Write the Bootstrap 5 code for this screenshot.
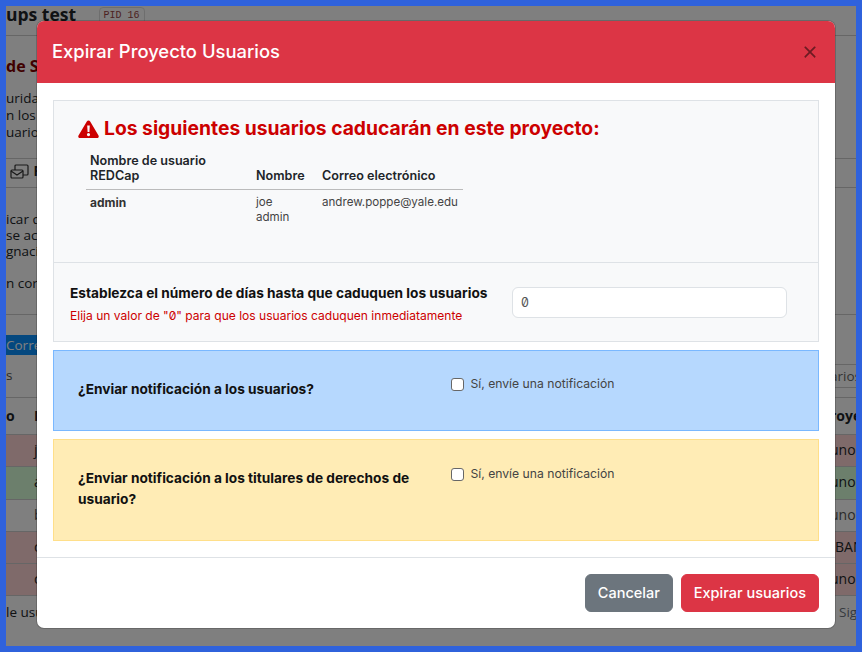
<!DOCTYPE html>
<html lang="es">
<head>
    <meta charset="UTF-8">
    <meta name="viewport" content="width=device-width, initial-scale=1.0">
    <title>Expirar Proyecto Usuarios</title>
    <link href="https://cdn.jsdelivr.net/npm/bootstrap@5.3.0/dist/css/bootstrap.min.css" rel="stylesheet">
    <style>
        html, body { margin: 0; height: 652px; overflow: hidden; }
        body { font-family: "Open Sans", "Noto Sans", sans-serif; font-size: 13.5px; color: #212529; }
        /* marco azul de la captura */
        .marco { position: relative; width: 862px; height: 652px; border: 6px solid #2f62dc; background: #fff; overflow: hidden; }
        .velo { position: absolute; inset: 0; background: #000; opacity: .5; }

        /* pagina de fondo */
        .fondo > div { white-space: nowrap; }
        .fila-titulo { height: 30px; font-size: 17.5px; font-weight: 700; line-height: 16px; border-bottom: 1px solid #ccc; }
        .pid { font-family: "Liberation Mono", monospace; font-size: 10px; font-weight: 400; color: #944; border: 1px solid #ddd; border-radius: 4px; padding: 2px 4px; margin-left: 18px; vertical-align: 3px; }
        .fila-sub { height: 42px; padding-top: 21px; font-size: 16px; line-height: 18px; font-weight: 700; color: #800000; }
        .fila-texto { height: 80px; padding-top: 12px; line-height: 17px; }
        .fila-tabs { height: 30px; line-height: 25px; border-top: 1px solid #ccc; border-bottom: 1px solid #ccc; font-weight: 700; }
        .fila-aviso { height: 127px; padding-top: 23px; line-height: 16px; border-bottom: 1px solid #ccc; }
        .hueco { height: 20px; }
        .barra-azul { height: 20px; width: 60px; background: #0890ff; color: #fff; line-height: 20px; }
        .fila-busca { height: 42px; padding-top: 9px; line-height: 22px; color: #555; }
        .caja-busca { border-top: 1px solid #ccc; border-bottom: 1px solid #ccc; width: 21px; height: 24px; overflow: hidden; color: #666; }
        .fila-tabla { line-height: 30px; border-top: 1px solid #ccc; font-size: 14px; }
        .cab-tabla { height: 37px; font-weight: 700; line-height: 35px; }
        .rojo { background: #ffd5d5; height: 32px; }
        .verde { background: #d8ffd8; height: 33px; }
        .blanco { height: 32px; color: #555; }
        .celda-a { width: 21px; overflow: hidden; }
        .entra { text-indent: -5px; }
        .celda-b { width: 30px; }
        .celda-izq { width: 28px; }
        .pie-tabla { border-top: 1px solid #ccc; padding-top: 6px; }

        /* modal */
        .modal.capa-modal { display: block; position: absolute; left: 30px; top: 14px; width: 800px; height: auto; overflow: visible; z-index: 5; }
        .capa-modal .modal-dialog { margin: 0; max-width: none; pointer-events: auto; }
        .capa-modal, .capa-modal .btn, .capa-modal .form-control { font-family: Inter, sans-serif; }
        .capa-modal .cabecera { height: 62px; padding: 0 15px 2px; border-bottom: 0; border-radius: 7px 7px 0 0; }
        .cabecera .modal-title { font-size: 18.4px; font-weight: 500; line-height: 1; color: #fff; }
        .capa-modal .cabecera .btn-close { box-sizing: border-box; width: 14px; height: 14px; padding: 0; margin: 2px 3px 0 auto; background-size: 14px; opacity: .5; }
        .capa-modal .cuerpo { padding: 17px 16px 16px; }
        .panel { background: #f8f9fa; border: 1px solid #dee2e6; margin-bottom: 8px; }
        .panel-usuarios { height: 162px; padding: 17px 24px 0; border-bottom: 1px solid #dee2e6; }
        .aviso-titulo { font-size: 19.3px; font-weight: 700; color: #c00; line-height: 21px; margin: 0 0 14px; display: flex; align-items: center; gap: 5px; }
        .lista-usuarios { width: 377px; margin: 0 0 0 8px; font-size: 12px; line-height: 15px; --bs-table-bg: transparent; table-layout: fixed; }
        .lista-usuarios.table > :not(caption) > * > * { padding: 0 4px; box-shadow: none; }
        .lista-usuarios.table thead th { padding-bottom: 6px; vertical-align: bottom; font-size: 12.6px; font-weight: 600; border-bottom: 1px solid #bbb; }
        .lista-usuarios.table tbody td { padding-top: 5px; border: 0; color: #444; font-size: 11.6px; }
        .lista-usuarios.table tbody td:first-child { font-size: 12px; font-weight: 700; color: #333; }
        .col-usuario { width: 166px; }
        .col-nombre { width: 66px; }
        .panel-dias { height: 78px; padding: 0 31px 0 16px; }
        .dias-texto { padding-top: 4px; }
        .dias-texto b { display: block; font-size: 13.7px; font-weight: 700; color: #111; line-height: 18px; margin-bottom: 6px; }
        .dias-texto span { display: block; font-size: 12.05px; color: #c00; line-height: 16px; }
        .dias-campo.form-control { width: 275px; height: 31px; min-height: 0; font-size: 12.5px; padding: 0 8px; font-variant-numeric: slashed-zero; color: #555; }
        .dias-texto .cero { display: inline; font-variant-numeric: slashed-zero; }
        .caja-azul { height: 81px; background: #b6d8fe; border: 1px solid #7ab8ff; }
        .caja-amarilla { height: 102px; background: #ffecb5; border: 1px solid #ffdf8a; margin-bottom: 0; }
        .caja-azul.row, .caja-amarilla.row { --bs-gutter-x: 0; margin-left: 0; margin-right: 0; }
        .pregunta { padding: 28px 15px 0 24px; font-size: 13.7px; font-weight: 700; color: #111; line-height: 21px; }
        .opcion { padding: 23px 0 0 15px; font-size: 12.2px; line-height: 20px; color: #444; }
        .caja-amarilla .opcion { padding-top: 24px; }
        .opcion .form-check-input { width: 13px; height: 13px; margin: 4px 3px 0 0; float: none; border-color: #666; vertical-align: top; }
        .capa-modal .pie { height: 71px; padding: 0 16px; border-top: 1px solid #dee2e6; gap: 8px; align-items: center; justify-content: flex-end; }
        .capa-modal .pie .btn { margin: 0; height: 38px; font-size: 14.5px; font-weight: 500; padding: 0 12px; }
    </style>
</head>
<body>
    <div class="marco">
        <!-- pagina detras del modal -->
        <div class="fondo">
            <div class="fila-titulo">ups test <span class="pid">PID 16</span></div>
            <div class="fila-sub">de Se</div>
            <div class="fila-texto">urida<br>n los e<br>uario.</div>
            <div class="fila-tabs">
                <svg width="20" height="16" viewBox="0 0 20 16" fill="none" stroke="#333" stroke-width="1.2" class="ms-1"><rect x="5" y="1" width="13" height="10" rx="1"/><rect x="1" y="6" width="12" height="8" rx="1" fill="#fff"/><path d="M1 7l6 4 6-4"/></svg>
                R
            </div>
            <div class="fila-aviso">icar q<br>se act<br>gnaci<br><br>n corre</div>
            <div class="hueco"></div>
            <div class="barra-azul">Correc</div>
            <div class="fila-busca d-flex justify-content-between">
                <span>s</span>
                <span class="caja-busca entra">arios</span>
            </div>
            <div class="fila-tabla cab-tabla d-flex justify-content-between">
                <div class="d-flex"><span class="celda-izq">o</span><span class="celda-b">N</span></div>
                <span class="celda-a entra">royec</span>
            </div>
            <div class="fila-tabla rojo d-flex justify-content-between"><div class="d-flex"><span class="celda-izq"></span><span class="celda-b">j</span></div><span class="celda-a entra">uno</span></div>
            <div class="fila-tabla verde d-flex justify-content-between"><div class="d-flex"><span class="celda-izq"></span><span class="celda-b">a</span></div><span class="celda-a entra">uno</span></div>
            <div class="fila-tabla blanco d-flex justify-content-between"><div class="d-flex"><span class="celda-izq"></span><span class="celda-b">b</span></div><span class="celda-a entra">uno</span></div>
            <div class="fila-tabla rojo d-flex justify-content-between"><div class="d-flex"><span class="celda-izq"></span><span class="celda-b">c</span></div><span class="celda-a">BAN</span></div>
            <div class="fila-tabla rojo d-flex justify-content-between"><div class="d-flex"><span class="celda-izq"></span><span class="celda-b">c</span></div><span class="celda-a entra">uno</span></div>
            <div class="pie-tabla d-flex justify-content-between"><span>le usu</span><span class="celda-a text-secondary ps-1">Sig</span></div>
        </div>
        <div class="velo"></div>

        <!-- modal -->
        <div class="modal capa-modal">
            <div class="modal-dialog">
                <div class="modal-content">
                    <div class="modal-header cabecera bg-danger">
                        <h5 class="modal-title">Expirar Proyecto Usuarios</h5>
                        <button type="button" class="btn-close" aria-label="Cerrar"></button>
                    </div>
                    <div class="modal-body cuerpo">
                        <div class="panel">
                            <div class="panel-usuarios">
                                <h5 class="aviso-titulo">
                                    <svg width="21" height="18" viewBox="0 0 21 18"><path fill="#c00" fill-rule="evenodd" d="M10.5 0.5c.7 0 1.3.4 1.7 1l8.3 14c.7 1.2-.1 2.5-1.5 2.5H2c-1.4 0-2.2-1.3-1.5-2.5l8.3-14c.4-.6 1-1 1.7-1zM9.2 5.5l.4 6.5h1.8l.4-6.5zM10.5 13a1.6 1.6 0 1 0 0 3.2 1.6 1.6 0 0 0 0-3.2z"/></svg>
                                    Los siguientes usuarios caducarán en este proyecto:
                                </h5>
                                <table class="table lista-usuarios">
                                    <thead>
                                        <tr><th class="col-usuario">Nombre de usuario<br>REDCap</th><th class="col-nombre">Nombre</th><th>Correo electrónico</th></tr>
                                    </thead>
                                    <tbody>
                                        <tr><td>admin</td><td>joe<br>admin</td><td>andrew.poppe@yale.edu</td></tr>
                                    </tbody>
                                </table>
                            </div>
                            <div class="panel-dias d-flex align-items-center justify-content-between">
                                <div class="dias-texto">
                                    <b>Establezca el número de días hasta que caduquen los usuarios</b>
                                    <span>Elija un valor de "<span class="cero">0</span>" para que los usuarios caduquen inmediatamente</span>
                                </div>
                                <input type="text" class="form-control dias-campo" value="0">
                            </div>
                        </div>
                        <div class="panel caja-azul row">
                            <div class="col-6 pregunta">¿Enviar notificación a los usuarios?</div>
                            <div class="col-6 opcion">
                                <input class="form-check-input" type="checkbox" id="avisoUsuarios">
                                <label for="avisoUsuarios">Sí, envíe una notificación</label>
                            </div>
                        </div>
                        <div class="panel caja-amarilla row">
                            <div class="col-6 pregunta">¿Enviar notificación a los titulares de derechos de usuario?</div>
                            <div class="col-6 opcion">
                                <input class="form-check-input" type="checkbox" id="avisoTitulares">
                                <label for="avisoTitulares">Sí, envíe una notificación</label>
                            </div>
                        </div>
                    </div>
                    <div class="modal-footer pie">
                        <button type="button" class="btn btn-secondary">Cancelar</button>
                        <button type="button" class="btn btn-danger">Expirar usuarios</button>
                    </div>
                </div>
            </div>
        </div>
    </div>
    <script src="https://cdn.jsdelivr.net/npm/bootstrap@5.3.0/dist/js/bootstrap.bundle.min.js"></script>
</body>
</html>
